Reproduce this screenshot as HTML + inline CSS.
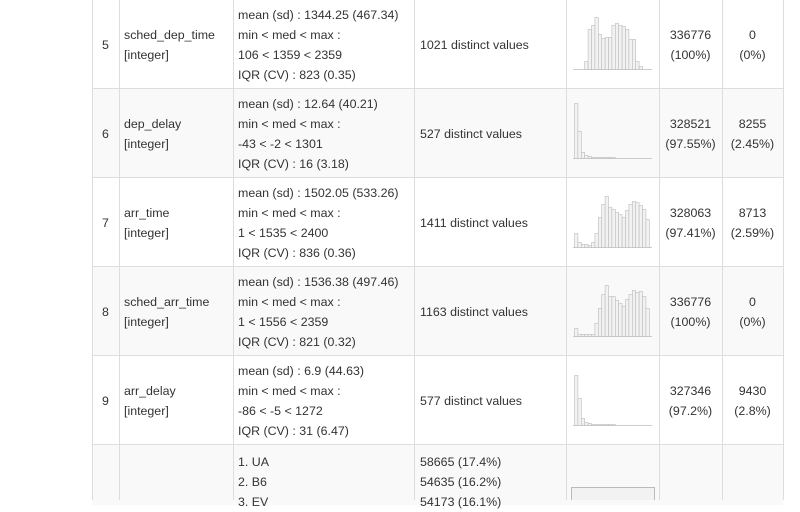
<!DOCTYPE html>
<html><head><meta charset="utf-8"><style>
body{margin:0;width:800px;height:500px;overflow:hidden;background:#fff;font-family:"Liberation Sans",sans-serif;font-size:12.4px;color:#333}
.row{position:absolute;left:92px;width:691px;height:89px}
.g{background:#f9f9f9}
.hl{position:absolute;left:92px;width:691px;height:1px;background:#ddd}
.vl{position:absolute;top:0;width:1px;height:500px;background:#ddd}
.t{position:absolute;line-height:20px;white-space:nowrap}
.c{text-align:center}
svg{position:absolute;left:0;top:0}
</style></head><body>
<div class="row g" style="top:89px"></div>
<div class="row g" style="top:267px"></div>
<div class="row g" style="top:445px;height:60px"></div>
<div class="hl" style="top:88px"></div><div class="hl" style="top:177px"></div><div class="hl" style="top:266px"></div><div class="hl" style="top:355px"></div><div class="hl" style="top:444px"></div>
<div class="vl" style="left:92px"></div><div class="vl" style="left:119px"></div><div class="vl" style="left:233px"></div><div class="vl" style="left:414px"></div><div class="vl" style="left:566px"></div><div class="vl" style="left:659px"></div><div class="vl" style="left:722px"></div><div class="vl" style="left:783px"></div>
<div id="txt"></div>
<svg id="s" width="800" height="500"></svg>
<script>
var rows=[
["5","sched_dep_time","[integer]",["mean (sd) : 1344.25 (467.34)","min &lt; med &lt; max :","106 &lt; 1359 &lt; 2359","IQR (CV) : 823 (0.35)"],"1021 distinct values","336776","(100%)","0","(0%)"],
["6","dep_delay","[integer]",["mean (sd) : 12.64 (40.21)","min &lt; med &lt; max :","-43 &lt; -2 &lt; 1301","IQR (CV) : 16 (3.18)"],"527 distinct values","328521","(97.55%)","8255","(2.45%)"],
["7","arr_time","[integer]",["mean (sd) : 1502.05 (533.26)","min &lt; med &lt; max :","1 &lt; 1535 &lt; 2400","IQR (CV) : 836 (0.36)"],"1411 distinct values","328063","(97.41%)","8713","(2.59%)"],
["8","sched_arr_time","[integer]",["mean (sd) : 1536.38 (497.46)","min &lt; med &lt; max :","1 &lt; 1556 &lt; 2359","IQR (CV) : 821 (0.32)"],"1163 distinct values","336776","(100%)","0","(0%)"],
["9","arr_delay","[integer]",["mean (sd) : 6.9 (44.63)","min &lt; med &lt; max :","-86 &lt; -5 &lt; 1272","IQR (CV) : 31 (6.47)"],"577 distinct values","327346","(97.2%)","9430","(2.8%)"]];
var h="";
rows.forEach(function(r,i){var y=i*89+5;
h+='<div class="t" style="left:102px;top:'+(y+30)+'px">'+r[0]+'</div>';
h+='<div class="t" style="left:124px;top:'+(y+20)+'px">'+r[1]+'<br>'+r[2]+'</div>';
h+='<div class="t" style="left:238px;top:'+y+'px">'+r[3].join('<br>')+'</div>';
h+='<div class="t" style="left:420px;top:'+(y+30)+'px">'+r[4]+'</div>';
h+='<div class="t c" style="left:659px;width:63px;top:'+(y+20)+'px">'+r[5]+'<br>'+r[6]+'</div>';
h+='<div class="t c" style="left:722px;width:61px;top:'+(y+20)+'px">'+r[7]+'<br>'+r[8]+'</div>';});
h+='<div class="t" style="left:238px;top:452px">1. UA<br>2. B6<br>3. EV</div>';
h+='<div class="t" style="left:420px;top:452px">58665 (17.4%)<br>54635 (16.2%)<br>54173 (16.1%)</div>';
document.getElementById('txt').innerHTML=h;
var H=[
[0,0,0,8,40,44,52,35,31,32,32,44,46,44,43,40,30,30,8,3,0,0,0],
[55,27,6,3,2,1,1,1,1,1,1,1,0,0,0,0,0,0,0,0,0,0,0],
[14,5,3,3,2,5,14,30,43,51,40,38,35,33,30,37,43,46,45,42,38,28,0],
[8,2,2,2,2,2,13,28,42,51,40,40,36,33,30,37,42,46,44,45,40,28,0],
[50,27,7,3,2,1,1,1,1,1,1,1,0,0,0,0,0,0,0,0,0,0,0]];
var s="";
H.forEach(function(a,i){var b=i*89+69;
s+='<line x1="573" x2="652" y1="'+(b+.5)+'" y2="'+(b+.5)+'" stroke="#ccc"/>';
a.forEach(function(v,j){if(v>0)s+='<rect x="'+(574.5+j*3.4)+'" y="'+(b-v+.5)+'" width="3.4" height="'+v+'" fill="#f2f2f2" stroke="#bbb" stroke-width="0.6"/>';});});
s+='<rect x="571.5" y="487.5" width="83" height="20" fill="#f2f2f2" stroke="#bbb"/>';
document.getElementById('s').innerHTML=s;
</script>
</body></html>
